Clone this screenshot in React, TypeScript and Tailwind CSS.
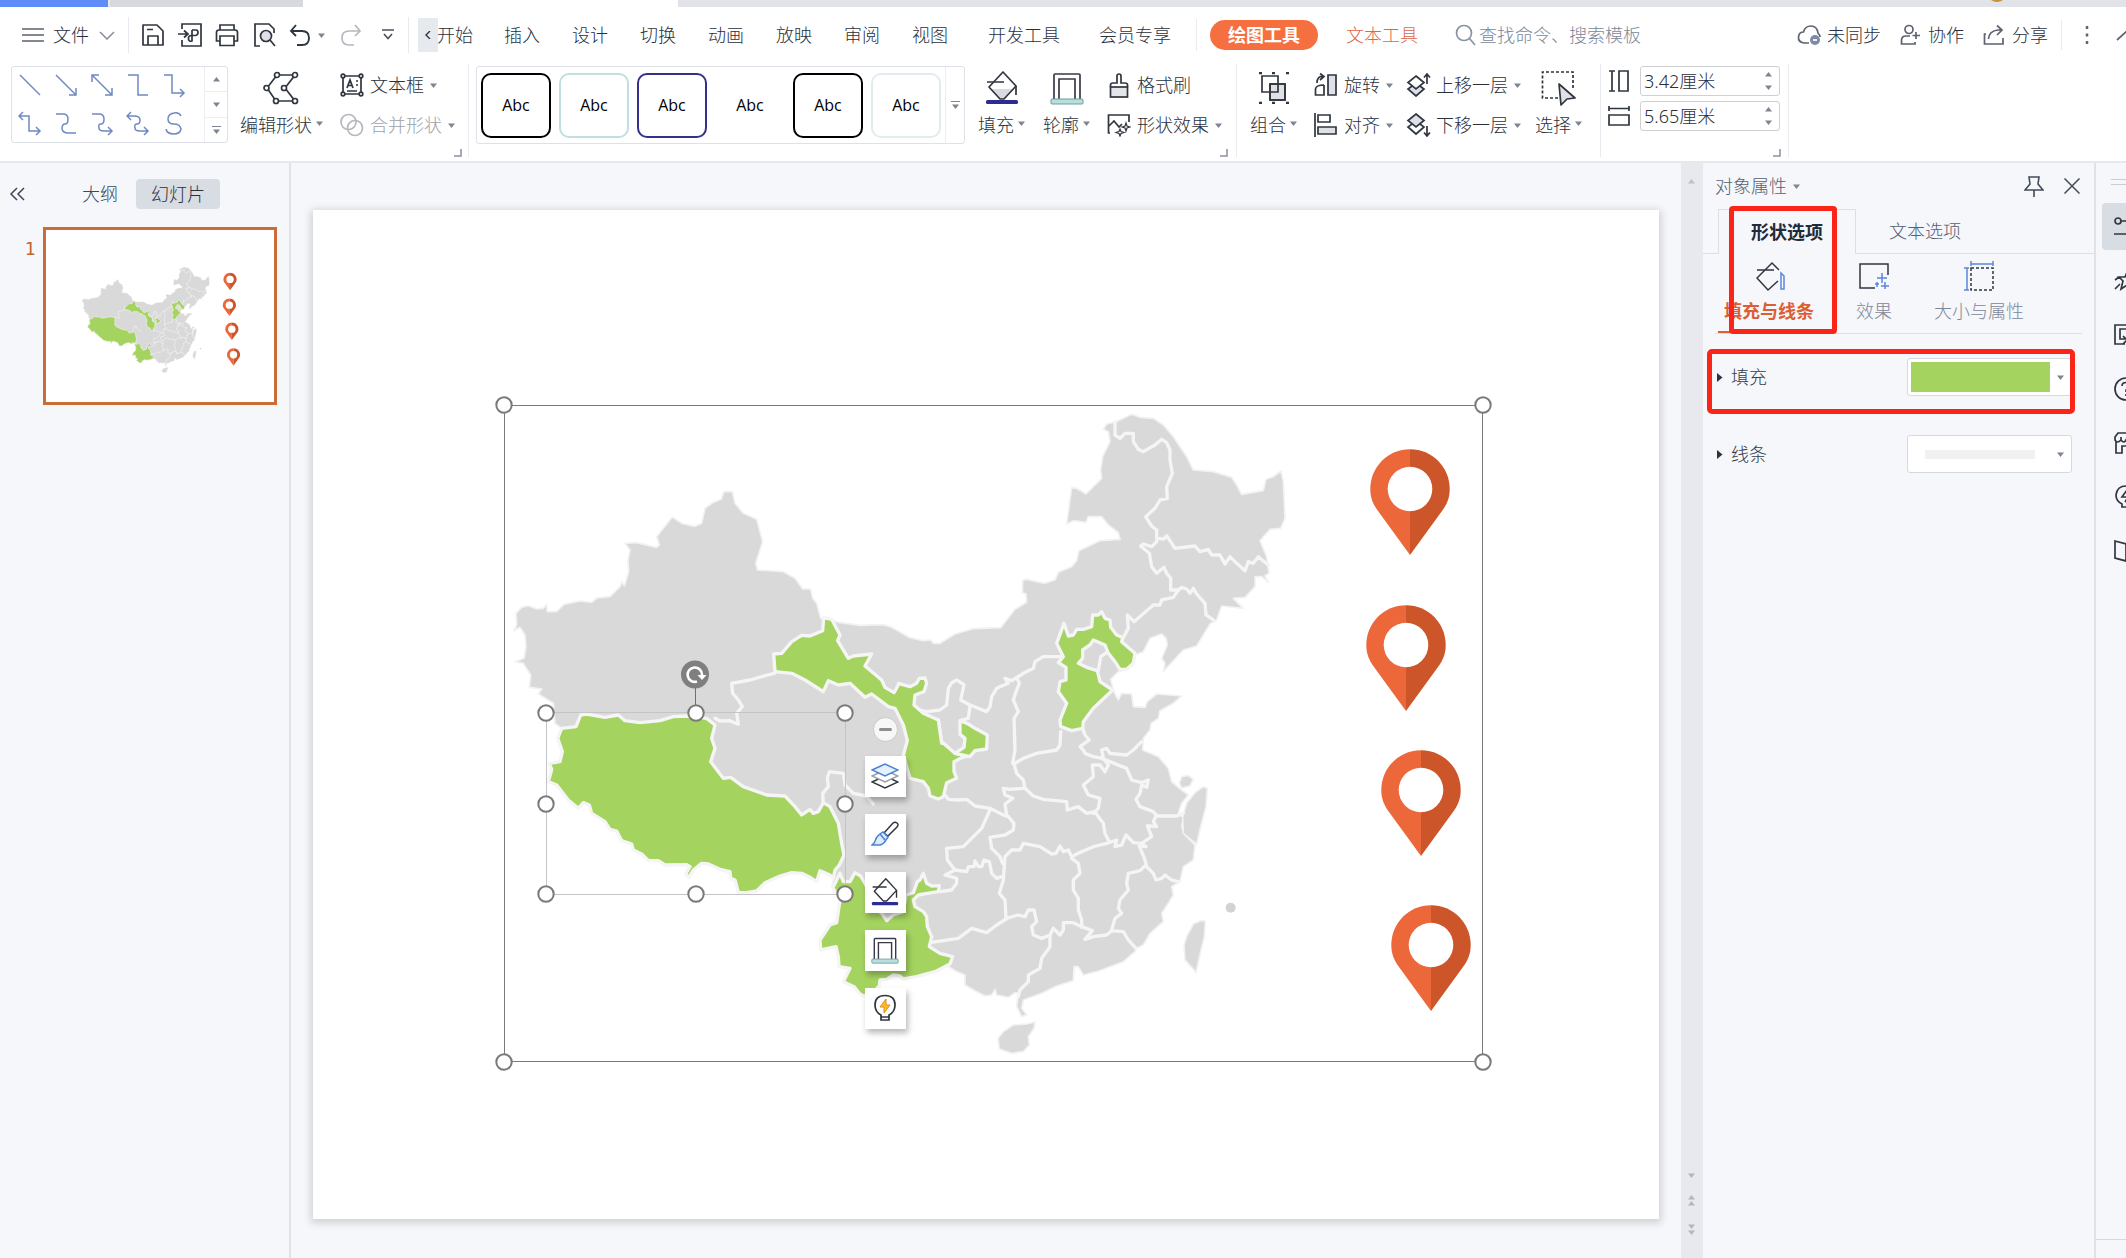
import type { ReactNode } from 'react';

type Point = [number, number];

/* Map geometry: outlines are listed per sheet, each sheet having its own origin. */
const at = (dx: number, dy: number, list: string): Point[] =>
  list.trim().split(/\s+/).map((p) => {
    const [x, y] = p.split(',').map(Number);
    return [x + dx, y + dy] as Point;
  });
const nw = (l: string) => at(0, 0, l);
const ne = (l: string) => at(1110, 0, l);
const sw = (l: string) => at(0, 930, l);
const se = (l: string) => at(1110, 930, l);
const line = (...parts: Point[][]) => 'M' + parts.flat().map((p) => p.join(' ')).join('L');
const shape = (...parts: Point[][]) => line(...parts) + 'Z';

const TIBET_COAST =
  '1030,535 1020,525 990,512 980,545 960,532 935,520 905,518 870,528 825,548 800,573 770,578 745,577 735,540 722,535 720,515 690,508 655,492 635,490 610,510 597,532 587,522 600,500 590,494 525,495 505,482 475,482 455,462 430,450 425,432 395,422 380,393 360,388 345,365 305,340 298,315 280,308 265,325 235,300 200,255 175,245 185,208 178,190 210,185 217,155 203,115 215,85';
const YUNNAN_COAST_E = '225,815 205,820 170,830 130,837 120,828 100,825 80,838 60,840 58,858 30,885 10,887';
const YUNNAN_COAST_W =
  '1110,882 1092,860 1060,845 1080,805 1047,800 1045,770 1038,740 992,750 990,720 1020,675 1040,668 1050,600 1027,560';

const LAND = shape(
  nw('78,670 95,652 115,647 140,657 160,655 170,643 172,665 200,664 222,643 270,633 305,637 320,624 360,620 390,590 395,575 403,588 416,545 414,510 420,480 405,460 440,458 500,472 508,465 500,440 547,381 575,400 615,409 635,400 645,355 665,340 693,328 702,305 727,305 735,340 760,370 800,388 818,455 797,520 803,540 880,545 915,565 938,597 962,597 968,625 980,640 992,685 1005,685 1025,690 1045,697 1110,706'),
  ne('70,704 95,712 150,743 190,752 212,750 220,760 240,760 285,732 340,716 422,713 465,658 500,637 498,612 487,608 488,572 500,568 555,580 585,570 595,547 635,530 650,512 657,482 720,452 780,448 775,428 745,405 725,380 685,380 678,397 640,392 620,402 635,293 650,295 678,312 725,265 722,240 728,200 750,155 745,125 730,118 740,102 768,95 815,73 840,82 880,85 910,105 940,140 980,200 1000,240 1060,245 1115,262 1130,285 1145,313 1210,302 1218,268 1240,260 1263,243 1270,275 1275,385 1262,415 1230,418 1200,452 1220,500 1227,550 1215,557 1225,577 1205,560 1185,560 1185,590 1155,622 1120,625 1150,655 1085,648 1070,690 1050,702 1010,768 970,780 910,845 915,820 905,805 922,765 918,745 905,732 870,745 850,785 825,795 820,825 800,838 775,845 752,868 762,905 775,930 785,910 815,912 820,950 855,952 862,935 890,912 965,918 940,940 900,962 895,985 873,1000 870,1020 850,1045'),
  se('848,150 895,170 925,205 935,245 950,258 985,285 965,310 955,340 970,352 965,380 975,405 1005,435 1000,480 970,500 960,545 935,560 940,585 925,610 905,640 910,665 870,700 850,735 830,745 825,755 790,785 710,815 670,825 655,800 642,800 640,842 590,858 545,880 490,900 485,925 500,945 485,950 470,920 475,880 465,878 445,892 410,885 405,868 395,885 375,888 345,872 315,855 315,825 285,812 250,790'),
  se(YUNNAN_COAST_E),
  sw(YUNNAN_COAST_W),
  sw(TIBET_COAST),
  nw('195,1000 190,940 145,912 155,897 118,892 122,855 100,820 75,815 102,805 108,770 105,735 90,712 72,722 80,705'),
);

const ISLANDS = [
  shape(se('1030,260 1042,265 1038,320 1022,380 1010,432 1000,425 970,400 968,350 980,310 1005,278')),
  shape(se('965,230 985,226 1000,238 990,258 965,264 958,250')),
  shape(se('1022,662 1036,663 1033,710 1022,755 1008,818 998,805 975,780 972,735 980,710 1000,672')),
  shape(se('460,975 500,972 525,966 522,985 505,1010 508,1035 490,1055 455,1060 418,1047 414,1015 430,995')),
];

const GREENS = [
  shape(
    sw('240,82 258,80 272,45 290,42 345,52 385,45 405,62 450,68 510,62 550,50 590,48 650,55 675,75 665,115 675,145 662,185 700,235 722,232 760,260 830,285 885,288 915,320 935,345 960,328 970,340 985,335 1000,308 1020,320 1045,370 1055,430 1062,465 1048,495 1035,510'),
    sw(TIBET_COAST),
  ),
  shape(
    nw('851,792 875,790 905,755 935,736 960,738 998,722 1001,683 1025,688 1050,735 1043,752 1075,805 1090,798 1145,792 1125,828 1175,870 1185,892 1212,908 1225,885'),
    ne('115,880 150,890 170,880 178,865 195,864 200,880 192,905 165,915 162,945 190,970 235,990 245,1060'),
    se('245,125 285,160 325,168 308,172 282,185 282,215 290,235 260,248 250,290 235,297 210,288 205,265 190,245 150,235 130,165 142,122 130,75 105,25'),
    ne('85,950 35,912 15,922'),
    nw('1080,880 1045,885 1015,872 1000,905 945,870 905,850 855,845'),
  ),
  shape(se('300,62 325,72 345,85 382,105 380,147 345,152 330,170 285,160 312,142 315,115 300,103')),
  shape(
    ne('612,700 625,738 640,735 650,718 670,718 695,710 698,675 715,675 725,665 735,685 750,690 752,712 770,735 788,742 785,755 825,790 820,820 800,838 780,838 765,815 745,790 735,765 700,750 690,765 668,780 668,805 655,820 680,832 712,842 720,875 758,900 700,955 670,995 668,1015 635,1022 602,1010 600,990 620,940 595,905 600,875 618,870 618,832 595,818 610,800 590,760'),
  ),
  shape(
    sw('1030,560 1040,540 1050,520 1060,545 1080,545 1095,518 1112,528 1125,550'),
    se('20,560 40,620 65,640 80,662 100,645 130,635 138,585 160,578 172,545 180,540 190,520 200,550 215,558 238,557 235,575 215,578 175,585 160,600 165,620 190,635 200,650 202,680 215,710 208,740 240,760 278,770 270,792'),
    se(YUNNAN_COAST_E),
    sw(YUNNAN_COAST_W),
  ),
];

const BORDERS = [
  line(nw('853,850 825,857 780,870 725,880 728,910 745,930 757,950 740,970 745,1003 718,992 690,993 675,985')),
  line(sw('1000,308 998,280 1015,260 1012,235 1018,215 1060,220 1065,255 1090,280 1130,288 1150,312')),
  line(ne('168,958 200,965 240,960 260,945 265,895 275,878 290,870 312,885 302,930 330,945 380,965 390,950 395,920 410,895 445,880 435,865 455,872 475,860 490,850 520,835 525,815 550,800 600,800')),
  line(ne('330,948 325,985 300,992')),
  line(ne('470,862 478,880 468,905 460,930 475,965 462,985 465,1080 458,1120')),
  line(ne('765,95 765,135 780,145 795,130 820,130 820,155 835,178 850,185 885,165 905,148 920,158 930,180 930,210 937,250 920,290 922,325 900,330 885,355 857,380 875,408 890,420 890,455 875,470 850,462 842,468 868,490 875,530 890,550 912,532 920,550 932,565 932,600 955,600')),
  line(ne('890,445 912,447 920,437 945,475 1005,468 1020,485 1045,478 1055,495 1080,495 1095,522 1110,500 1130,520 1155,542 1165,515 1180,520 1195,500 1225,525')),
  line(ne('955,600 965,592 980,597 990,610 1000,595 1010,612 1035,640 1038,675 1060,690')),
  line(ne('955,600 940,622 905,630 900,645 880,645 822,695 802,675 805,715 785,752')),
  line(ne('740,788 722,800 715,842')),
  line(se('235,60 245,125 285,162')),
  line(se('255,285 265,298 295,300 320,298 345,318 390,325 430,345 445,350 462,370 460,390 435,405 390,412 395,445 420,470 428,490')),
  line(se('390,330 365,385 310,440 260,445 262,480 285,510')),
  line(se('440,345 435,312 458,295 435,285 430,265 450,268 490,265')),
  line(se('460,185 470,220 490,240 495,265 520,288 550,298 620,305 622,330 655,320 680,340 705,335 715,350 730,370 735,400 745,420')),
  line(se('465,190 490,175 530,160 590,150 600,135 602,95')),
  line(se('668,85 675,105 688,120 660,140 670,150 675,160 700,170 730,175 725,150 740,145 750,160 800,165 820,150 845,125')),
  line(se('730,175 745,195 735,215 720,195 697,195 700,230 670,255 685,285 720,295 715,325 700,340')),
  line(se('725,175 800,205 815,240 845,248 865,240 860,262 845,255 840,280 828,298 840,320 880,335 890,348 950,348 970,340')),
  line(se('890,345 880,365 890,380 862,377 875,410 845,430 858,440 838,438 855,480 860,500 880,520 888,540 905,535 915,525 935,540 955,545')),
  line(se('845,430 820,428 798,405 785,435 765,440 770,420 740,430 700,440 650,462 635,470 625,450 610,455 600,438 588,460 575,462 540,440 490,430 480,450 455,450 435,470 430,540 418,580 435,600 438,655')),
  line(se('635,475 655,490 660,520 640,540 640,570 655,595 655,630 665,660 665,682')),
  line(se('858,495 840,512 805,520 800,550 805,570 780,600 775,625 785,640 765,655 755,690')),
  line(se('438,655 475,645 495,650 505,630 522,630 530,665 515,680 520,705 545,715 570,705 580,685 600,705 610,690 610,668 640,668 665,680 697,692 675,718 700,710 740,705 755,692 790,695 805,720 828,745')),
  line(se('442,655 410,675 380,698 335,685 295,715 210,728')),
  line(se('570,705 570,740 545,775 540,805 505,825 505,845 480,870 475,890')),
  line(se('285,510 255,525 290,535 290,550 275,570 240,575')),
  line(se('285,510 320,515 325,500 342,500 345,483 355,500 365,500 372,480 388,485 395,520 410,535 425,530')),
];

const PINS = [
  [1410, 489],
  [1406, 645],
  [1421, 790],
  [1431, 945],
];

function SlideArt() {
  return (
    <>
      <g transform="translate(490 390) scale(.33333)" strokeLinejoin="round" strokeLinecap="round">
        <path d={LAND} fill="#d9d9d9" stroke="#f2f2f2" strokeWidth="5" />
        {ISLANDS.map((d) => (
          <path key={d} d={d} fill="#d9d9d9" stroke="#f2f2f2" strokeWidth="5" />
        ))}
        <circle cx="2222" cy="1553" r="15" fill="#d3d3d3" />
        {BORDERS.map((d) => (
          <path key={d} d={d} fill="none" stroke="#f5f5f5" strokeWidth="10" />
        ))}
        {GREENS.map((d) => (
          <path key={d} d={d} fill="#a5d360" stroke="#f5f5f5" strokeWidth="10" />
        ))}
      </g>
      {PINS.map(([x, y]) => (
        <g key={y} transform={`translate(${x} ${y})`}>
          <path d="M0-39.7C-22-39.7-39.7-22-39.7 0C-39.7 9-37 15-32 22L0 66Z" fill="#ec683a" />
          <path d="M0-39.7C22-39.7 39.7-22 39.7 0C39.7 9 37 15 32 22L0 66Z" fill="#cc5529" />
          <circle r="22.3" fill="#fff" />
        </g>
      ))}
    </>
  );
}

/* ---------- small building blocks ---------- */

function Ico({ w, h, c = '', children, color = '#30363f', sw: s = 1.7 }: { w: number; h: number; c?: string; children: ReactNode; color?: string; sw?: number }) {
  return (
    <svg width={w} height={h} viewBox={`0 0 ${w} ${h}`} className={`shrink-0 ${c}`} fill="none" stroke={color} strokeWidth={s} aria-hidden="true">
      {children}
    </svg>
  );
}

const Caret = ({ up = false, c = '' }: { up?: boolean; c?: string }) => (
  <svg width="7" height="5" viewBox="0 0 7 5" className={`shrink-0 ${c}`} fill="#7d8492" aria-hidden="true">
    <path d={up ? 'M0 4.5L3.5 0L7 4.5Z' : 'M0 .5H7L3.5 5Z'} />
  </svg>
);

const Corner = ({ c }: { c: string }) => (
  <Ico w={8} h={8} c={`absolute bottom-1 ${c}`} color="#8b93a1" sw={1.5}>
    <path d="M7 0V7H0" />
  </Ico>
);

const Rule = ({ c }: { c: string }) => <span className={`w-px shrink-0 bg-[#e9eaef] ${c}`} />;

function Tall({ label, icon, c }: { label: string; icon: ReactNode; c: string }) {
  return (
    <button className={`flex shrink-0 flex-col items-center ${c}`}>
      <span className="flex h-10 items-center pt-1.5">{icon}</span>
      <span className="flex h-10 items-center gap-1">
        {label}
        <Caret c="mb-1" />
      </span>
    </button>
  );
}

function Wide({ label, icon, caret = true, c = '' }: { label: string; icon: ReactNode; caret?: boolean; c?: string }) {
  return (
    <button className={`flex h-10 items-center gap-1.5 ${c}`}>
      <span className="flex w-6 justify-center">{icon}</span>
      {label}
      {caret && <Caret />}
    </button>
  );
}

/* ---------- shared drawings ---------- */

const Bucket = ({ size = 34, shade = true }: { size?: number; shade?: boolean }) => (
  <svg width={size} height={size} viewBox="0 0 34 34" fill="none" stroke="#30363f" strokeWidth="1.7" aria-hidden="true">
    {shade && <path d="M5 18H29L19 28H15Z" fill="#d9dbe0" stroke="none" />}
    <path d="M18 1L4 16L15 28H19L31 15Z" strokeLinejoin="round" />
    <path d="M2 11H19M31 15V24" />
    <rect x="1" y="29" width="32" height="4" rx="1.5" fill="#2f2c8f" stroke="none" />
  </svg>
);

const Outline = ({ size = 34 }: { size?: number }) => (
  <svg width={size} height={size} viewBox="0 0 34 34" fill="none" stroke="#3a3a48" strokeWidth="1.7" aria-hidden="true">
    <path d="M4 28V4Q4 3 5 3H29Q30 3 30 4V28M9 28V8H25V28" />
    <rect x="1" y="28" width="32" height="5" rx="1" fill="#b9dede" stroke="#6f9c9c" strokeWidth="1" />
  </svg>
);

/* ---------- top ---------- */

const TABS = ['插入', '设计', '切换', '动画', '放映', '审阅', '视图'];

function MenuBar() {
  return (
    <nav className="flex h-[57px] items-center whitespace-nowrap pb-px">
      <button className="ml-[22px] flex items-center">
        <Ico w={22} h={16} color="#5b616c" sw={1.6}>
          <path d="M0 2H22M0 8H22M0 14H22" />
        </Ico>
        <span className="ml-[9px]">文件</span>
        <Ico w={16} h={9} c="ml-2.5" color="#8c919b" sw={1.6}>
          <path d="M1 1L8 8L15 1" />
        </Ico>
      </button>
      <Rule c="ml-[13px] h-9" />
      <button aria-label="保存" className="ml-3">
        <Ico w={24} h={24}>
          <path d="M2 2H16L22 8V22H2ZM7 22V13H17V22M6 6.500H12" strokeLinejoin="round" />
        </Ico>
      </button>
      <button aria-label="输出为PDF" className="ml-[13px]">
        <Ico w={24} h={24}>
          <path d="M4 6V1H23V23H4V17M0 11H9M6 7.500L10 11L6 14.500M14 7H18Q20 7 20 9.500T17.500 12.500H13Q10 13 10.500 16T14 18V7" />
        </Ico>
      </button>
      <button aria-label="打印" className="ml-[13px]">
        <Ico w={24} h={24}>
          <path d="M5 7V2H19V7M5 18H1.500V9.500Q1.500 7 4 7H20Q22.500 7 22.500 9.500V18H19M5 13H19V22.500H5Z" />
        </Ico>
      </button>
      <button aria-label="打印预览" className="ml-[14px]">
        <Ico w={24} h={24}>
          <path d="M7 23H2V1H16L21 6V10" />
          <circle cx="13" cy="13" r="5.500" fill="#dfe1e7" />
          <path d="M17 17L22 23" />
        </Ico>
      </button>
      <button aria-label="撤销" className="ml-3 flex items-center">
        <Ico w={22} h={24} sw={1.9}>
          <path d="M7 2L2 8L7 13M2 8H13Q20 8 20 15T13 22H8" />
        </Ico>
        <Caret c="ml-[7px]" />
      </button>
      <button aria-label="恢复" className="ml-[15px]">
        <Ico w={22} h={24} color="#b4b8bf">
          <path d="M15 2L20 8L15 13M20 8H9Q2 8 2 15T9 22H14" />
        </Ico>
      </button>
      <button aria-label="自定义快速访问" className="ml-5">
        <Ico w={12} h={12} color="#4c525d">
          <path d="M0 1H12M2 5L6 9.500L10 5" />
        </Ico>
      </button>
      <Rule c="ml-3.5 h-9" />
      <button aria-label="向左滚动" className="ml-[9px] flex h-[34px] w-5 items-center justify-center bg-[#e6e9ee]">
        <Ico w={6} h={8}>
          <path d="M5 0L1 4L5 8" strokeWidth="1.400" />
        </Ico>
      </button>
      <button className="-ml-px">开始</button>
      <div className="ml-[15px] flex">
        {TABS.map((t) => (
          <button key={t} className="px-4">{t}</button>
        ))}
        <button className="pl-6 pr-5">开发工具</button>
        <button className="px-[19px]">会员专享</button>
      </div>
      <Rule c="ml-1.5 h-8" />
      <button className="ml-[13px] flex h-[30px] items-center rounded-full bg-[#f66f41] px-[18px] font-bold text-white">绘图工具</button>
      <button className="ml-7 text-[#dd674b]">文本工具</button>
      <label className="ml-[37px] flex items-center text-[#7c8698]">
        <Ico w={22} h={22} color="#8a93a5">
          <circle cx="9" cy="9" r="7.500" />
          <path d="M14.500 14.500L20 21" />
        </Ico>
        <input className="ml-0.5 w-[180px] bg-transparent outline-none placeholder:text-[#7c8698]" placeholder="查找命令、搜索模板" />
      </label>
      <div className="ml-auto flex items-center pr-0.5">
        <button className="flex items-center gap-[5px]">
          <Ico w={25} h={22} color="#5c626e">
            <path d="M12 19H7Q1 18 1.500 13T6.500 8Q8 2 14 2T21 9Q23 11 23 13" />
            <circle cx="18" cy="16" r="5" fill="#7d8ba6" stroke="none" />
            <path d="M16 16H20" stroke="#fff" />
          </Ico>
          未同步
        </button>
        <button className="ml-[19px] flex items-center gap-[7px]">
          <Ico w={21} h={22} color="#5c626e">
            <circle cx="9" cy="5.500" r="4" />
            <path d="M16 8V15M12.500 11.500H20M10 12H6Q1.500 12 1.500 16.500V20H15V18" />
          </Ico>
          协作
        </button>
        <button className="ml-[19px] flex items-center gap-[7px]">
          <Ico w={22} h={22} color="#5c626e">
            <path d="M3 10H1.500V20H20V14M5.500 15Q6 7 15 6H19M14 1.500L19 6L14 11" />
          </Ico>
          分享
        </button>
        <Rule c="ml-[13px] h-[30px]" />
        <button aria-label="更多" className="ml-[23px]">
          <Ico w={4} h={20}>
            <path d="M2 1V4M2 8.500V11.500M2 16V19" stroke="#60656f" strokeWidth="2.500" />
          </Ico>
        </button>
        <button aria-label="折叠功能区" className="-mr-1 ml-[27px]">
          <Ico w={12} h={12} color="#5c626e">
            <path d="M1 11L12 1" />
          </Ico>
        </button>
      </div>
    </nav>
  );
}

const CONNECTORS = [
  'M2 2L22 22',
  'M2 2L22 22M22 15V22H15',
  'M2 2L22 22M22 15V22H15M2 9V2H9',
  'M2 2H12V22H22',
  'M2 2H10V20H22M18 16L22 20L18 24',
  'M5 1L1 5L5 9M1 5H11V20H22M18 16L22 20L18 24',
  'M2 3H9Q14 3 14 8T11 13T8 18Q9 22 14 22H22',
  'M2 3H9Q14 3 14 8T11 13T9 17Q9 20 14 20H22M18 16L22 20L18 24',
  'M5 1L1 5L5 9M1 5H8Q14 5 14 9T11 13T9 17Q9 20 14 20H22M18 16L22 20L18 24',
  'M19 5Q17 1 12 2Q6 3 6 8T12 13T19 18Q18 23 12 23Q5 23 4 18',
];

const STYLES = ['border-black', 'border-[#c1dfdf]', 'border-[#35308b]', 'border-transparent', 'border-black', 'border-[#e0eced]'];

function SizeField({ id, label, value, icon }: { id: string; label: string; value: string; icon: ReactNode }) {
  return (
    <div className="flex items-center gap-[11px]">
      <label htmlFor={id} aria-label={label} className="flex w-[21px] justify-center">{icon}</label>
      <div className="flex h-[30px] w-[140px] items-center rounded-[3px] border border-[#cfd1d7] bg-white pr-[7px]">
        <input id={id} defaultValue={value} className="w-full min-w-0 bg-transparent pl-[3px] outline-none" />
        <span className="flex flex-col gap-2">
          <button aria-label="增大" className="flex"><Caret up /></button>
          <button aria-label="减小" className="flex"><Caret /></button>
        </span>
      </div>
    </div>
  );
}

function Ribbon() {
  return (
    <div className="flex h-[99px] items-stretch whitespace-nowrap border-b-2 border-[#e6e8ec]">
      <section className="relative flex w-[468px] shrink-0 pt-px">
        <div className="ml-[11px] mt-px flex h-[77px] w-[217px] rounded-[3px] border border-[#dfe1e8]">
          <div className="grid flex-1 grid-cols-[repeat(5,36px)] items-center pl-1.5">
            {CONNECTORS.map((d) => (
              <button key={d} aria-label="连接符" className="flex">
                <Ico w={24} h={25} color="#7089c4" sw={1.5}>
                  <path d={d} />
                </Ico>
              </button>
            ))}
          </div>
          <div className="flex w-[23px] flex-col divide-y divide-[#eceef2] border-l border-[#eceef2]">
            <button aria-label="上一行" className="flex flex-1 items-center justify-center"><Caret up /></button>
            <button aria-label="下一行" className="flex flex-1 items-center justify-center"><Caret /></button>
            <button aria-label="更多形状" className="flex flex-1 flex-col items-center justify-center gap-0.5"><span className="h-px w-[9px] bg-[#7d8492]" /><Caret /></button>
          </div>
        </div>
        <Tall
          c="ml-3"
          label="编辑形状"
          icon={
            <Ico w={38} h={34}>
              <path d="M14 4H32L22 17L32 30H13L4 17Z" />
              <g fill="#fff">
                <circle cx="14" cy="4" r="2.500" /><circle cx="32" cy="4" r="2.500" /><circle cx="21" cy="17" r="2.500" />
                <circle cx="32" cy="30" r="2.500" /><circle cx="13" cy="30" r="2.500" /><circle cx="3.500" cy="17" r="2.500" />
              </g>
            </Ico>
          }
        />
        <div className="ml-[17px]">
          <Wide
            label="文本框"
            icon={
              <Ico w={24} h={24}>
                <path d="M3 3H21V21H3ZM7 15L10 7L13 15M8 12.500H12M16 8H18M16 12H18M7 18H17" />
                <g fill="#fff"><circle cx="3" cy="3" r="1.800" /><circle cx="21" cy="3" r="1.800" /><circle cx="3" cy="21" r="1.800" /><circle cx="21" cy="21" r="1.800" /></g>
              </Ico>
            }
          />
          <Wide
            c="text-[#9ea1a7]"
            label="合并形状"
            icon={
              <Ico w={24} h={24} color="#b5b8bd">
                <circle cx="8.500" cy="9" r="7.500" /><circle cx="15" cy="15" r="7.500" />
              </Ico>
            }
          />
        </div>
        <Corner c="right-1.5" />
      </section>
      <Rule c="mb-1" />
      <section className="relative flex w-[767px] shrink-0 pt-px">
        <div className="ml-[7px] mt-px flex h-[78px] w-[489px] rounded-[3px] border border-[#dfe1e8]">
          <div className="flex items-center gap-2 pl-1">
            {STYLES.map((s, i) => (
              <button key={i} className={`h-[65px] w-[70px] rounded-[10px] border-2 bg-white font-['Open_Sans'] text-[16px] font-medium text-black ${s}`}>Abc</button>
            ))}
          </div>
          <button aria-label="更多样式" className="ml-1 flex flex-1 flex-col items-center justify-center gap-0.5 border-l border-[#eceef2]"><span className="h-px w-[9px] bg-[#7d8492]" /><Caret /></button>
        </div>
        <Tall c="ml-[13px]" label="填充" icon={<Bucket />} />
        <Tall c="ml-[18px]" label="轮廓" icon={<Outline />} />
        <div className="ml-[17px]">
          <Wide
            caret={false}
            label="格式刷"
            icon={
              <Ico w={20} h={25}>
                <rect x="1.500" y="14" width="17" height="10" fill="#e3e5e9" />
                <path d="M1.500 14V12Q1.500 10 4 10H8V3Q8 1 10 1T12 3V10H16Q18.500 10 18.500 12V14" />
              </Ico>
            }
          />
          <Wide
            label="形状效果"
            icon={
              <Ico w={24} h={24}>
                <path d="M3 20H1.500V2H22V9M2 13L7 8L12 14L15 11" />
                <path d="M19 10L20 13L23 14L20 15L19 18L18 15L15 14L18 13ZM13 16L14 18.500L17 19.500L14 20.500L13 23L12 20.500L9 19.500L12 18.500Z" strokeWidth="1.200" />
              </Ico>
            }
          />
        </div>
        <Corner c="right-2" />
      </section>
      <Rule c="mb-1" />
      <section className="flex w-[363px] shrink-0 pt-px">
        <Tall
          c="ml-[13px]"
          label="组合"
          icon={
            <Ico w={32} h={32}>
              <rect x="12" y="12" width="15" height="16" fill="#dfe1e6" />
              <path d="M4 4H20V20H4ZM12 12H27V28H12Z" />
              <path d="M1 1H4M28 1H31M1 31H4M28 31H31M14 1H17M14 31H17" strokeWidth="2.500" />
            </Ico>
          }
        />
        <div className="ml-[17px]">
          <Wide
            label="旋转"
            icon={
              <Ico w={24} h={24}>
                <path d="M14 2H22V22H14Z" fill="#dfe1e6" />
                <path d="M10 12V22H1.500V16Q2 12 10 12M3 10Q3 3 9 3.500M6 .500L10 3.500L6 7" />
              </Ico>
            }
          />
          <Wide
            label="对齐"
            icon={
              <Ico w={24} h={24}>
                <path d="M1 0V24M4 2H16V9H4Z" /><path d="M4 14H22V21H4Z" fill="#dfe1e6" />
              </Ico>
            }
          />
        </div>
        <div className="ml-[13px]">
          <Wide
            label="上移一层"
            icon={
              <Ico w={25} h={24}>
                <path d="M10 10L18 16L10 23L2 16Z" fill="#dfe1e6" /><path d="M10 3L18 9.500L10 16L2 9.500Z" fill="#fff" /><path d="M21 11V1M18 4.500L21 1L24 4.500" />
              </Ico>
            }
          />
          <Wide
            label="下移一层"
            icon={
              <Ico w={25} h={24}>
                <path d="M10 8L18 14L10 21L2 14Z" fill="#fff" /><path d="M10 1L18 7.500L10 14L2 7.500Z" fill="#dfe1e6" /><path d="M21 13V23M18 19.500L21 23L24 19.500" />
              </Ico>
            }
          />
        </div>
        <Tall
          c="ml-[14px]"
          label="选择"
          icon={
            <Ico w={36} h={36}>
              <path d="M17 28H1.500V2H32V18" strokeDasharray="3 2" /><path d="M18 14L34 28L26 29L20 35Z" fill="#dfe1e6" strokeLinejoin="round" />
            </Ico>
          }
        />
      </section>
      <Rule c="mb-1" />
      <section className="relative flex w-[187px] shrink-0 flex-col gap-[5px] pl-[7px] pt-0.5">
        <SizeField id="shape-height" label="高度" value="3.42厘米" icon={<Ico w={20} h={22}><path d="M0 1H6M0 21H6M3 1V21M10 1H19V21H10Z" /></Ico>} />
        <SizeField id="shape-width" label="宽度" value="5.65厘米" icon={<Ico w={22} h={20}><path d="M1 0V5M21 0V5M1 2.500H21M1 9H21V19H1Z" /></Ico>} />
        <Corner c="right-[7px]" />
      </section>
      <Rule c="mb-1" />
    </div>
  );
}

/* ---------- body ---------- */

function SlideList() {
  return (
    <aside className="w-[291px] shrink-0 border-r-2 border-[#dfe2e7]">
      <div className="flex items-center pt-4">
        <button aria-label="收起" className="ml-[9px]">
          <Ico w={16} h={14} color="#3e4758" sw={1.5}>
            <path d="M8 1L2 7L8 13M15 1L9 7L15 13" />
          </Ico>
        </button>
        <button className="ml-[57px] text-[#3e4758]">大纲</button>
        <button className="ml-[18px] h-[30px] rounded-[4px] bg-[#d8dde4] px-[15px]">幻灯片</button>
      </div>
      <div className="mt-[18px] flex">
        <span className="w-[43px] pl-[25px] pt-[10px] font-['DejaVu_Sans'] text-[17px] font-normal text-[#c5632d]">1</span>
        <button aria-label="幻灯片 1" className="w-[234px] border-[3px] border-[#c96c36] bg-white">
          <svg viewBox="296 190 1380 1041" className="block w-full">
            <SlideArt />
          </svg>
        </button>
      </div>
    </aside>
  );
}

const HANDLES: Point[] = [
  [504, 405], [1483, 405], [504, 1062], [1483, 1062],
  [546, 713], [696, 713], [845, 713], [546, 804], [845, 804], [546, 894], [696, 894], [845, 894],
];

const FLOATING: { name: string; icon: ReactNode }[] = [
  {
    name: '叠放次序',
    icon: (
      <Ico w={28} h={28} sw={1.4}>
        <path d="M1 20L14 14L27 20L14 26Z" fill="#fff" /><path d="M1 14L14 8L27 14L14 20Z" fill="#fff" stroke="#9a9da3" /><path d="M1 8L14 2L27 8L14 14Z" fill="#e5f1fd" stroke="#4a7fd6" />
      </Ico>
    ),
  },
  {
    name: '样式',
    icon: (
      <Ico w={28} h={28} sw={1.5}>
        <path d="M13 13L22 3Q24 1.500 26 3T26 7L17 16Z" />
        <path d="M1 25Q4 23 4.500 20T9 14L12 12L17 17L15 20Q13 24 9 25Z" fill="#dcecfd" stroke="#4a7fd6" /><path d="M9 14L14 20" stroke="#4a7fd6" />
      </Ico>
    ),
  },
  { name: '填充', icon: <Bucket size={28} shade={false} /> },
  { name: '轮廓', icon: <Outline size={28} /> },
  {
    name: '智能推荐',
    icon: (
      <Ico w={28} h={28} sw={1.7}>
        <path d="M10 21Q4 18 4 11Q4 1.500 14 1.500T24 11Q24 18 18 21V26H10ZM10 23H18" /><path d="M15 5L9 13H13L13 19L19 11H15Z" fill="#fbbf24" stroke="#e58a1c" strokeWidth="1" />
      </Ico>
    ),
  },
];

function Slide() {
  return (
    <main className="min-w-0 flex-1 px-[22px] pt-[47px]">
      <div className="relative bg-white shadow-[0_2px_8px_2px_rgba(0,0,0,0.16)]">
        <svg viewBox="313 210 1346 1009" className="block w-full">
          <SlideArt />
          <g fill="none">
            <rect x="504.500" y="405.500" width="978" height="656" stroke="#7b7b7b" />
            <rect x="546.500" y="712.500" width="299" height="182" stroke="#c3c3c8" />
            <path d="M695.500 688V706" stroke="#6f6f6f" />
          </g>
          {HANDLES.map(([x, y]) => (
            <circle key={`${x}-${y}`} cx={x} cy={y} r="7.700" fill="#fff" stroke="#7a7a7a" strokeWidth="2" />
          ))}
          <circle cx="695" cy="674.500" r="14" fill="#7f7f7f" />
          <path d="M697 681.500A7.200 7.200 0 1 1 702 675" fill="none" stroke="#fff" strokeWidth="2.600" />
          <path d="M697.500 675H706.500L702 680Z" fill="#fff" />
        </svg>
        <div className="absolute left-[41%] top-[50.2%] flex flex-col items-center gap-[17px]">
          <button aria-label="收起工具" className="flex h-[25px] w-[25px] items-center justify-center rounded-full border border-[#c9c9c9] bg-[#f7f7f7]">
            <span className="h-[3px] w-[13px] rounded-full bg-[#8d8d8d]" />
          </button>
          {FLOATING.map((f, i) => (
            <button key={f.name} aria-label={f.name} className={`flex h-[41px] w-[41px] items-center justify-center bg-white shadow-[2px_4px_6px_rgba(0,0,0,0.28)] ${i === 0 ? '-mt-[3px]' : ''}`}>
              {f.icon}
            </button>
          ))}
        </div>
      </div>
    </main>
  );
}

function ScrollTrack() {
  return (
    <div className="flex w-[22px] shrink-0 flex-col items-center bg-[#e8e9ef] pb-[23px] pr-px pt-4">
      <button aria-label="向上滚动" className="flex opacity-40"><Caret up /></button>
      <button aria-label="向下滚动" className="mt-auto flex opacity-50"><Caret /></button>
      <button aria-label="上一页" className="mt-[17px] flex flex-col gap-px opacity-50"><Caret up /><Caret up /></button>
      <button aria-label="下一页" className="mt-[18px] flex flex-col gap-px opacity-50"><Caret /><Caret /></button>
    </div>
  );
}

const Expand = () => (
  <svg width="6" height="9" viewBox="0 0 6 9" fill="#2b3240" aria-hidden="true"><path d="M0 0L5.500 4.500L0 9Z" /></svg>
);

function Properties() {
  return (
    <aside className="relative w-[391px] shrink-0 text-[#566074]">
      <header className="flex h-[46px] items-center pl-3 pr-[14px]">
        <button className="flex items-center gap-1.5">对象属性<Caret /></button>
        <button aria-label="固定" className="ml-auto">
          <Ico w={20} h={21} color="#434b59" sw={1.6}>
            <path d="M5 1H15L14 8L19 14H1L6 8ZM10 14V21" />
          </Ico>
        </button>
        <button aria-label="关闭" className="ml-5">
          <Ico w={16} h={16} color="#434b59" sw={1.5}>
            <path d="M.5 .5L15.500 15.500M15.500 .5L.5 15.500" />
          </Ico>
        </button>
      </header>
      <div className="flex h-[45px]">
        <span className="w-[15px] border-b border-[#dcdfe5]" />
        <button className="w-[138px] border border-b-0 border-[#dcdfe5] font-bold text-[#222b3a]">形状选项</button>
        <span className="flex-1 border-b border-[#dcdfe5]"><button className="ml-[33px] h-full">文本选项</button></span>
      </div>
      <div className="ml-3 mr-3 flex h-20 border-b border-[#dcdfe5] text-[#7d879b]">
        <button className="ml-[3px] flex w-[102px] flex-col items-center gap-[7px] border-b-2 border-[#dc5e34] pt-1.5 font-bold text-[#dc5e34]">
          <Ico w={30} h={32} sw={1.5} c="ml-1">
            <path d="M23 10L16 3L1 18L12 30L22 21M1 10H18" /><path d="M25 13L28 16V29H25Z" stroke="#5b86dc" />
          </Ico>
          填充与线条
        </button>
        <button className="ml-9 flex flex-col items-center gap-[7px] pt-1.5">
          <Ico w={32} h={32} sw={1.5}>
            <path d="M17 28H2V4H30V15" /><path d="M24 13V23M19 18H29M27 22V29M23 26H31M19 22V27M17 24H21" stroke="#5b86dc" />
          </Ico>
          效果
        </button>
        <button className="ml-[42px] flex flex-col items-center gap-[7px] pt-1.5">
          <Ico w={32} h={32} sw={1.5}>
            <path d="M8 8H30V30H8Z" strokeDasharray="3 2" /><path d="M8 4H30M8 1V6M30 1V6M4 8V30M1 8H6M1 30H6" stroke="#5b86dc" />
          </Ico>
          大小与属性
        </button>
      </div>
      <div className="mr-[22px] flex items-center pl-[14px] pt-6 text-[#333c4c]">
        <button className="flex items-center gap-2"><Expand />填充</button>
        <button aria-label="填充颜色" className="ml-auto flex h-[38px] w-[165px] items-center gap-[7px] rounded-[3px] border border-[#d5d9e0] bg-white pl-[3px]">
          <span className="h-[30px] w-[139px] bg-[#a5d360]" /><Caret />
        </button>
      </div>
      <div className="mr-[22px] mt-[39px] flex items-center pl-[14px] text-[#333c4c]">
        <button className="flex items-center gap-2"><Expand />线条</button>
        <button aria-label="线条样式" className="ml-auto flex h-[38px] w-[165px] items-center gap-[22px] rounded-[3px] border border-[#d5d9e0] bg-white pl-[17px]">
          <span className="h-[9px] w-[110px] bg-[#f1f1f1]" /><Caret />
        </button>
      </div>
      <span className="pointer-events-none absolute left-[26px] top-[43px] h-[128px] w-[108px] rounded-[4px] border-[5px] border-[#fb2418]" />
      <span className="pointer-events-none absolute left-1 top-[186px] h-[65px] w-[368px] rounded-[5px] border-[5px] border-[#fb2418]" />
    </aside>
  );
}

const RAIL: { name: string; icon: ReactNode }[] = [
  { name: '动画', icon: <path d="M14 1L17 8H24L18 13L20 20L13 16L7 20L9 12L5 8H11ZM1 11L5 8M1 20L6 15" /> },
  { name: '切换', icon: <path d="M11 21H1V2H23V12M23 6H6V16H11M9 13L13 17L9 21" /> },
  { name: '帮助', icon: <><circle cx="12" cy="12" r="11" /><path d="M8 9Q8 5.500 12 5.500T16 9Q16 11 12 13V15M12 17V19" /></> },
  { name: '商城', icon: <path d="M2 11V22H8V15H15V22H22V11M1 6L4 2H20L23 6V9Q21 13 18 10Q15 13 12 9Q10 13 7 9Q3 13 1 9ZM7 6V9" /> },
  { name: '推荐', icon: <path d="M8 22V19Q2 16 2 10Q3 1 12 1T22 10Q22 16 16 19V22ZM13 5L8 12H14L11 17" /> },
  { name: '素材', icon: <path d="M1 2L12 5V22L1 19ZM12 5L23 2V19L12 22" /> },
];

function Rail() {
  return (
    <aside className="flex w-8 shrink-0 flex-col overflow-hidden border-l-2 border-[#dfe2e7]">
      <div className="ml-[15px] mt-4 h-1.5 shrink-0 border-y border-[#c8ccd3]" />
      <button aria-label="属性" className="ml-1.5 mt-[18px] flex h-[47px] w-12 shrink-0 items-center rounded-[4px] bg-[#d8dde4] pl-3">
        <Ico w={24} h={24}>
          <circle cx="4" cy="6" r="3" />
          <path d="M7 6H24M0 19H24" />
        </Ico>
      </button>
      <div className="mt-[19px] flex flex-col gap-[30px]">
        {RAIL.map((r) => (
          <button key={r.name} aria-label={r.name} className="ml-[18px] flex w-12">
            <Ico w={24} h={24}>{r.icon}</Ico>
          </button>
        ))}
      </div>
      <div className="mb-[18px] mt-auto h-px bg-[#d5d8de]" />
    </aside>
  );
}

export default function App() {
  return (
    <div className="flex min-h-screen flex-col overflow-hidden bg-[#f5f7fa] font-['Noto_Sans','Noto_Sans_CJK_SC',sans-serif] text-[18px] font-light leading-6 text-[#2a303b]">
      <header className="bg-white">
        <div className="flex h-[7px]">
          <span className="w-[108px] bg-[#5f8cf7]" />
          <span className="w-[195px] border-l-2 border-[#e8e9ee] bg-[#d8d9de]" />
          <span className="w-[375px]" />
          <span className="relative flex-1 overflow-hidden bg-[#e2e3e8]">
            <span className="absolute -top-[18px] right-[119px] h-5 w-5 rounded-full bg-[#c4963c]" />
          </span>
        </div>
        <MenuBar />
        <Ribbon />
      </header>
      <div className="flex flex-1">
        <SlideList />
        <Slide />
        <ScrollTrack />
        <Properties />
        <Rail />
      </div>
    </div>
  );
}
